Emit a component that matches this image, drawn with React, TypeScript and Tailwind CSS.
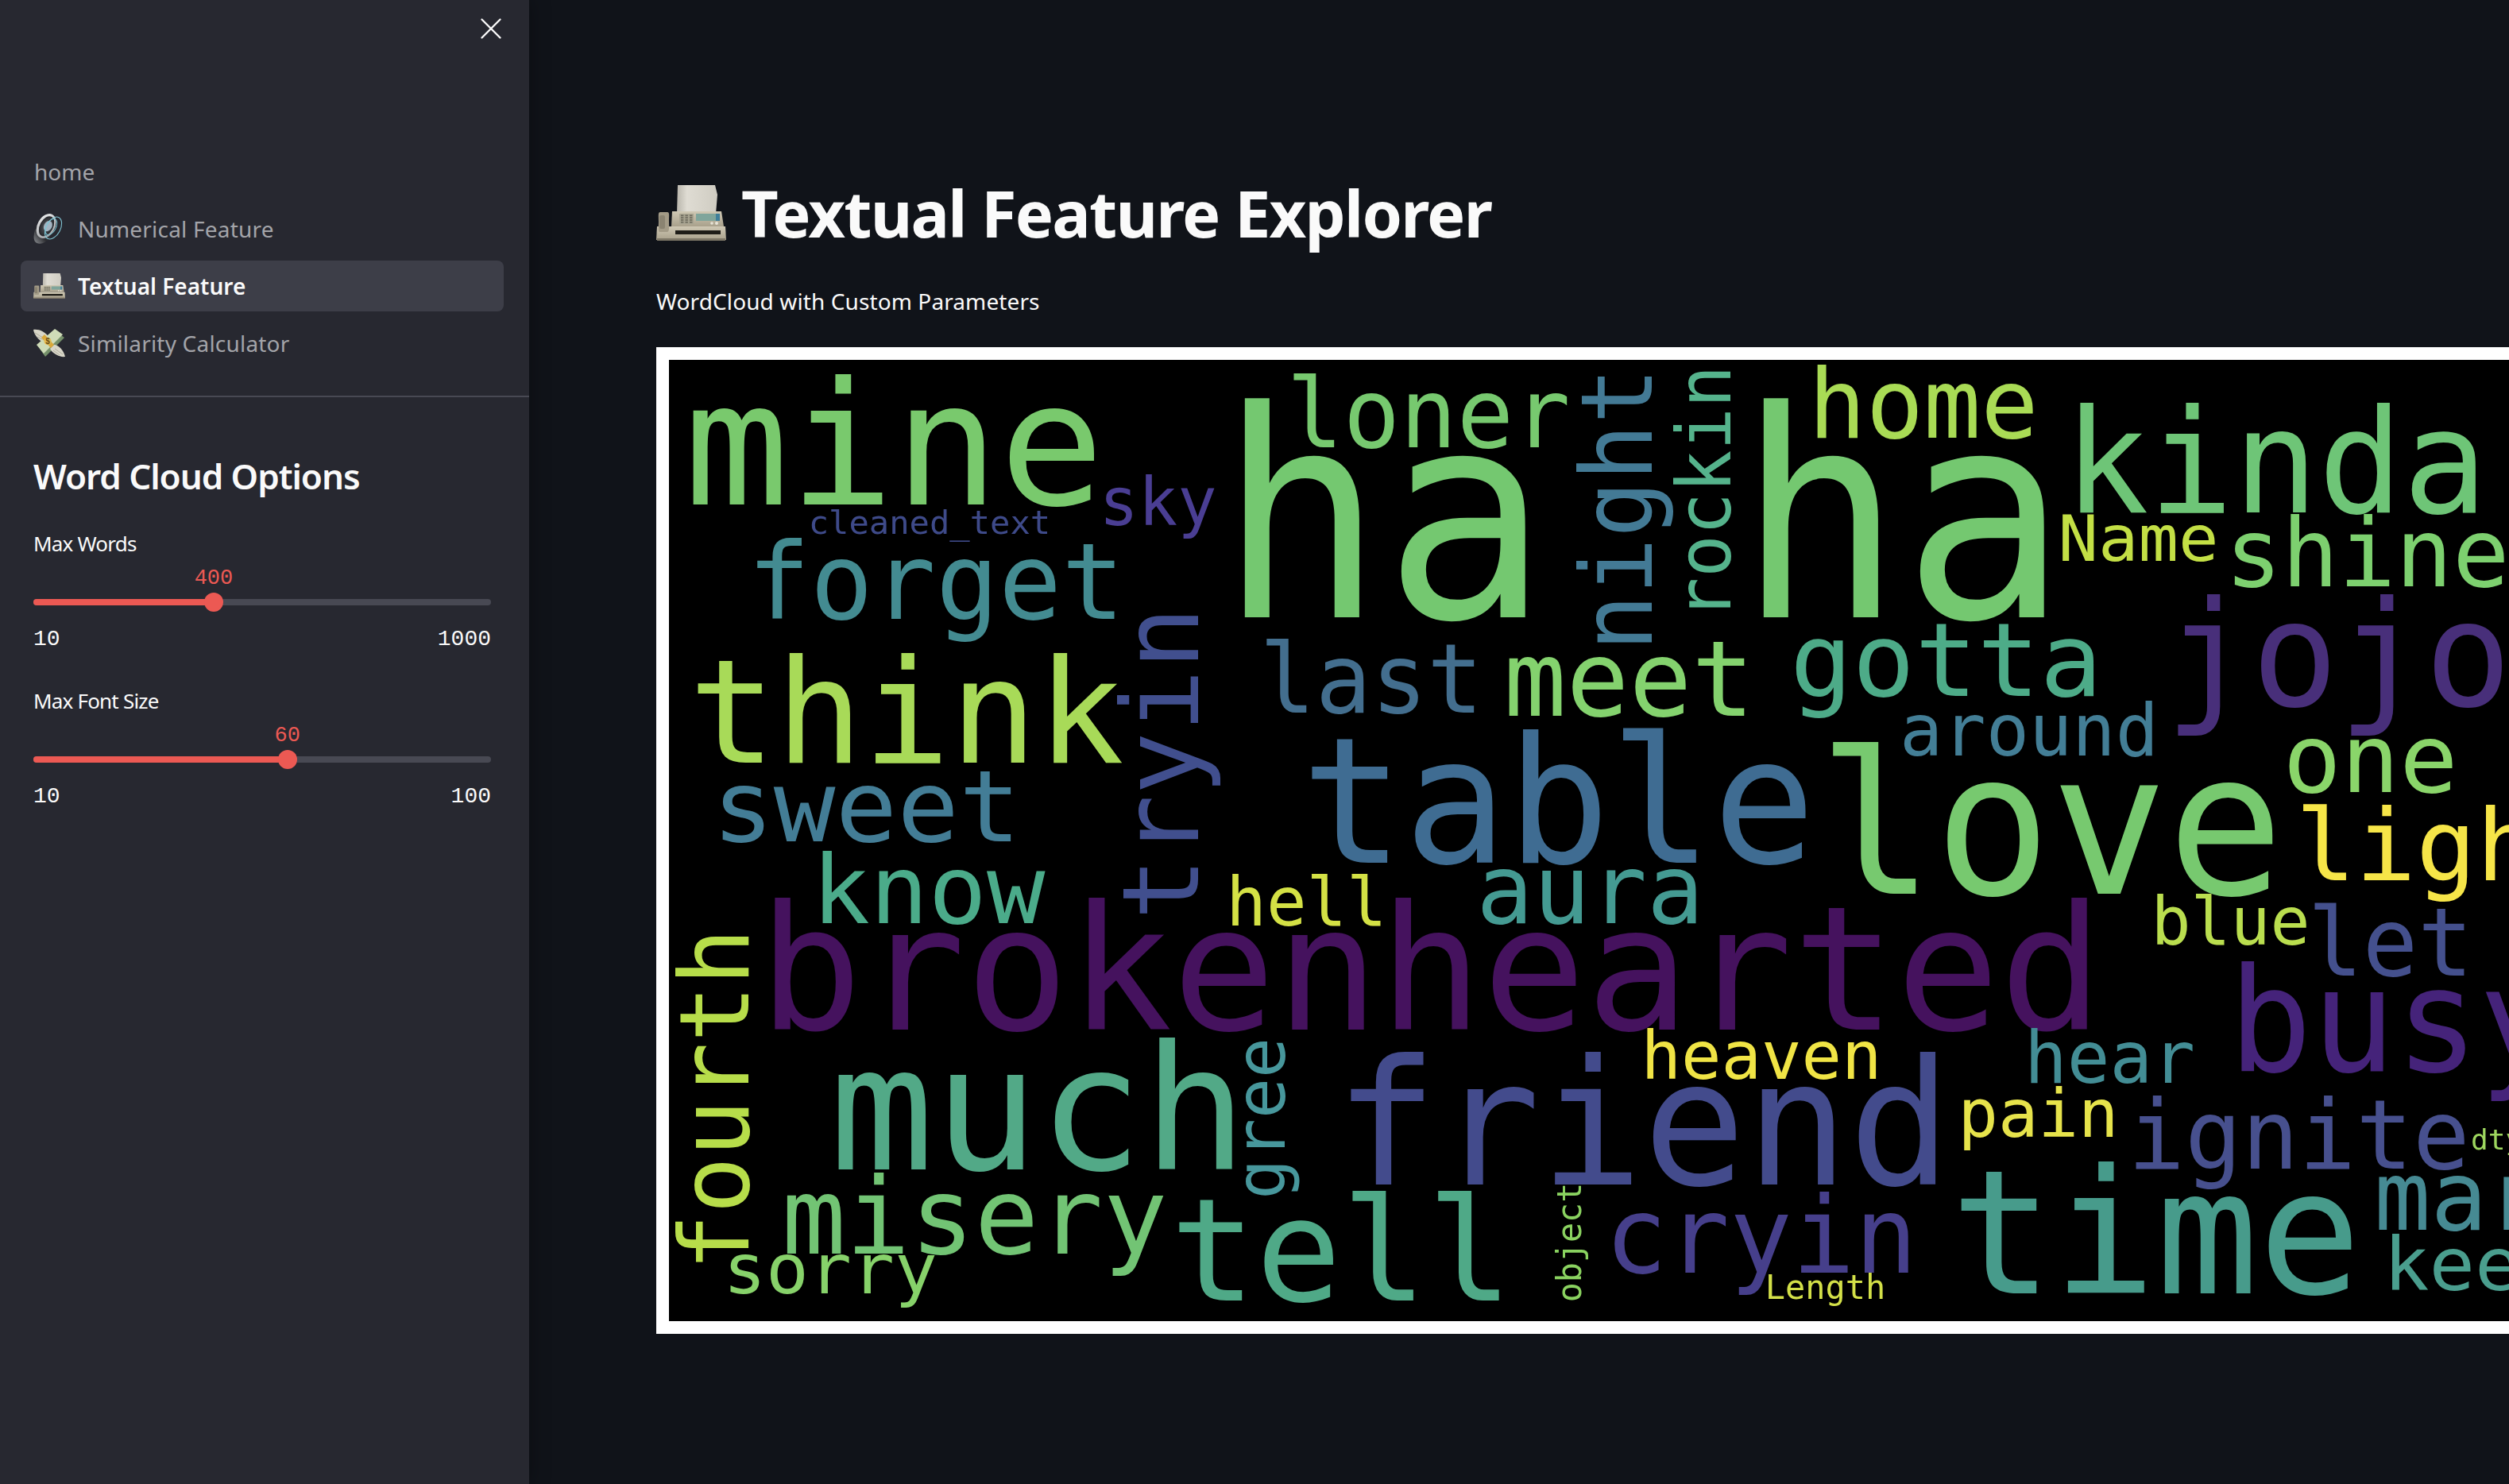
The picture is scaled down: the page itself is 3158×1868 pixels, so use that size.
import { X } from "lucide-react";

type W = { t: string; x: number; x2: number; y: number; s: number; c: string };
type R = { t: string; bx: number; y: number; y2: number; s: number; c: string };

const words: W[] = [
  { t: "mine", x: 873, x2: 1378, y: 634, s: 216, c: "#79c96d" },
  { t: "ha", x: 1554, x2: 1929, y: 776, s: 363, c: "#74c870" },
  { t: "ha", x: 2207, x2: 2582, y: 776, s: 363, c: "#74c870" },
  { t: "loner", x: 1626, x2: 1970, y: 562, s: 121, c: "#77c96f" },
  { t: "sky", x: 1388, x2: 1527, y: 660, s: 83, c: "#4a3e93" },
  { t: "cleaned_text", x: 1020, x2: 1320, y: 671, s: 41, c: "#3e4a89" },
  { t: "forget", x: 948, x2: 1408, y: 778, s: 134, c: "#438b91" },
  { t: "think", x: 877, x2: 1405, y: 959, s: 181, c: "#a8da58" },
  { t: "last", x: 1592, x2: 1860, y: 896, s: 122, c: "#436e8e" },
  { t: "meet", x: 1900, x2: 2201, y: 900, s: 132, c: "#84d26e" },
  { t: "table", x: 1650, x2: 2273, y: 1085, s: 221, c: "#3f6c92" },
  { t: "sweet", x: 903, x2: 1278, y: 1058, s: 125, c: "#437d96" },
  { t: "home", x: 2283, x2: 2559, y: 550, s: 122, c: "#a9db55" },
  { t: "kinda", x: 2608, x2: 3121, y: 644, s: 181, c: "#6ec577" },
  { t: "Name", x: 2595, x2: 2788, y: 705, s: 81, c: "#c3df45" },
  { t: "shine", x: 2807, x2: 3152, y: 737, s: 120, c: "#7dd06f" },
  { t: "gotta", x: 2260, x2: 2639, y: 875, s: 128, c: "#4dab88" },
  { t: "jojo", x: 2735, x2: 3151, y: 887, s: 183, c: "#482f7a" },
  { t: "around", x: 2396, x2: 2712, y: 950, s: 91, c: "#437e96" },
  { t: "one", x: 2880, x2: 3087, y: 996, s: 119, c: "#8ad56a" },
  { t: "love", x: 2302, x2: 2861, y: 1124, s: 249, c: "#77c96f" },
  { t: "light", x: 2896, x2: 3262, y: 1107, s: 124, c: "#f6e548" },
  { t: "know", x: 1028, x2: 1309, y: 1161, s: 120, c: "#4bab8a" },
  { t: "hell", x: 1548, x2: 1741, y: 1164, s: 85, c: "#d4e145" },
  { t: "aura", x: 1865, x2: 2138, y: 1161, s: 122, c: "#449a92" },
  { t: "brokenhearted", x: 967, x2: 2635, y: 1295, s: 218, c: "#45125e" },
  { t: "much", x: 1056, x2: 1558, y: 1471, s: 218, c: "#52a987" },
  { t: "misery", x: 991, x2: 1462, y: 1577, s: 134, c: "#72c474" },
  { t: "sorry", x: 915, x2: 1175, y: 1627, s: 88, c: "#87d26a" },
  { t: "tell", x: 1483, x2: 1894, y: 1636, s: 180, c: "#4fa987" },
  { t: "friend", x: 1692, x2: 2444, y: 1490, s: 220, c: "#434b8c" },
  { t: "blue", x: 2712, x2: 2903, y: 1188, s: 84, c: "#bade4f" },
  { t: "let", x: 2911, x2: 3106, y: 1227, s: 120, c: "#44508d" },
  { t: "busy", x: 2815, x2: 3215, y: 1347, s: 182, c: "#45237a" },
  { t: "heaven", x: 2070, x2: 2364, y: 1357, s: 84, c: "#f0e445" },
  { t: "hear", x: 2553, x2: 2758, y: 1362, s: 90, c: "#438d95" },
  { t: "pain", x: 2469, x2: 2662, y: 1430, s: 83, c: "#e6e34b" },
  { t: "ignite", x: 2685, x2: 3102, y: 1470, s: 121, c: "#47508e" },
  { t: "dtype", x: 3112, x2: 3217, y: 1446, s: 36, c: "#9ed75f" },
  { t: "mar", x: 2995, x2: 3195, y: 1547, s: 122, c: "#468a93" },
  { t: "keep", x: 3005, x2: 3225, y: 1623, s: 92, c: "#4a9e8e" },
  { t: "cryin", x: 2027, x2: 2406, y: 1601, s: 134, c: "#463f8b" },
  { t: "time", x: 2467, x2: 2960, y: 1627, s: 217, c: "#479b8b" },
  { t: "Length", x: 2224, x2: 2371, y: 1634, s: 42, c: "#d3e048" },
];

const rotated: R[] = [
  { t: "tryin", bx: 1508, y: 1150, y2: 770, s: 133, c: "#414f8e" },
  { t: "night", bx: 2079, y: 812, y2: 468, s: 124, c: "#437a95" },
  { t: "rockin", bx: 2178, y: 774, y2: 464, s: 94, c: "#55b38c" },
  { t: "fourth", bx: 942, y: 1592, y2: 1174, s: 121, c: "#b7dd4a" },
  { t: "gree", bx: 1617, y: 1504, y2: 1310, s: 88, c: "#47979c" },
  { t: "object", bx: 1990, y: 1636, y2: 1490, s: 42, c: "#8ad260" },
];

const B = 0.055;

function WordCloud() {
  return (
    <svg width={2420} height={1210} viewBox="842 452 2420 1210" className="block shrink-0 blur-[0.6px]" fontFamily="'DejaVu Sans Mono', monospace">
      <rect x={842} y={452} width={2420} height={1210} fill="#000" />
      {words.map((w, i) => (
        <text key={i} x={w.x - B * w.s} y={w.y} fontSize={w.s} fill={w.c} textLength={w.x2 - w.x + 2 * B * w.s} lengthAdjust="spacingAndGlyphs">
          {w.t}
        </text>
      ))}
      {rotated.map((w, i) => (
        <text key={i} transform={`translate(${w.bx} ${w.y + B * w.s}) rotate(-90)`} fontSize={w.s} fill={w.c} textLength={w.y - w.y2 + 2 * B * w.s} lengthAdjust="spacingAndGlyphs">
          {w.t}
        </text>
      ))}
    </svg>
  );
}

function Fax({ className }: { className: string }) {
  return (
    <svg viewBox="0 0 88 70" className={className}>
      <defs>
        <linearGradient id="faxPaper" x1="0" x2="1" y1="0" y2="0">
          <stop offset="0" stopColor="#b9b6ac" />
          <stop offset="0.25" stopColor="#dfdcd3" />
          <stop offset="1" stopColor="#cfccc2" />
        </linearGradient>
        <linearGradient id="faxBody" x1="0" x2="0" y1="0" y2="1">
          <stop offset="0" stopColor="#cfc8b4" />
          <stop offset="1" stopColor="#a9a18c" />
        </linearGradient>
      </defs>
      <path d="M27 0H74L77 12L75 36H26Z" fill="url(#faxPaper)" />
      <path d="M20 33H82L85 52H19Z" fill="url(#faxBody)" />
      <rect x="29" y="36" width="18" height="13" fill="#a8a491" />
      {[0, 1, 2, 3].map((r) =>
        [0, 1, 2].map((c) => <rect key={`${r}${c}`} x={31 + c * 5.5} y={37.5 + r * 2.8} width="3.4" height="1.7" fill="#6d6a5d" />),
      )}
      <rect x="50" y="36" width="25" height="9" fill="#7fa59b" />
      <rect x="75" y="36" width="5" height="9" fill="#3f7f9a" />
      <circle cx="70" cy="48" r="1.8" fill="#e8e4d8" />
      <circle cx="76" cy="48" r="2" fill="#e8e4d8" />
      <path d="M1 52H87L88 69H0Z" fill="url(#faxBody)" />
      <rect x="1" y="67" width="86" height="3" fill="#7d7666" />
      <rect x="24" y="57" width="57" height="5" fill="#1f1d18" />
      <path d="M5 34C2 34 3 38 3 46C3 52 2 58 4 59H14C17 58 16 52 16 46C16 38 17 34 14 34Z" fill="#a39b87" />
      <rect x="4" y="38" width="7" height="17" rx="2" fill="#8a8371" />
    </svg>
  );
}

function Speaker({ className }: { className: string }) {
  return (
    <svg viewBox="0 0 40 40" className={className}>
      <defs>
        <radialGradient id="spkCone" cx="0.5" cy="0.5" r="0.6">
          <stop offset="0" stopColor="#5c5f64" />
          <stop offset="1" stopColor="#1b1c20" />
        </radialGradient>
        <linearGradient id="spkRim" x1="0" x2="1" y1="0" y2="1">
          <stop offset="0" stopColor="#f0f1f2" />
          <stop offset="1" stopColor="#9a9da1" />
        </linearGradient>
        <linearGradient id="spkBack" x1="0" x2="1" y1="1" y2="0">
          <stop offset="0" stopColor="#8d9094" />
          <stop offset="0.45" stopColor="#2b2c30" />
          <stop offset="1" stopColor="#4c4e52" />
        </linearGradient>
      </defs>
      <path d="M6 13C1 21 -1 31 2 36C6 41 15 39 21 31Z" fill="url(#spkBack)" />
      <g transform="rotate(28 17 17)">
        <ellipse cx="16" cy="17" rx="11" ry="16.5" fill="url(#spkRim)" />
        <ellipse cx="16.5" cy="17" rx="8.3" ry="13.5" fill="url(#spkCone)" />
        <ellipse cx="18" cy="16" rx="5" ry="7" fill="#a3b4c2" />
        <ellipse cx="22" cy="15" rx="6" ry="11" fill="none" stroke="#74bccc" strokeWidth="1" />
        <ellipse cx="25" cy="15" rx="9" ry="15" fill="none" stroke="#82c6d5" strokeWidth="1.1" />
      </g>
    </svg>
  );
}

function Money({ className }: { className: string }) {
  return (
    <svg viewBox="0 0 40 36" className={className}>
      <path d="M0 1C6 0 15 3 20 11L12 17C7 14 1 8 0 1Z" fill="#d8d6c8" />
      <path d="M2 5L12 11M5 10L13 14" stroke="#a9a797" strokeWidth="0.9" />
      <path d="M8 25L30 4L39 11L15 35Z" fill="#75906a" />
      <path d="M4 20L27 0L37 7L13 31Z" fill="#cfdcb8" />
      <path d="M26 20C32 20 38 27 40 35C33 36 24 31 21 25Z" fill="#d8d6c8" />
      <path d="M27 25L37 32M25 27L33 33" stroke="#a9a797" strokeWidth="0.9" />
      <path d="M14 7L26 20L22 24L10 11Z" fill="#d9a83a" />
      <circle cx="18" cy="15.5" r="4.6" fill="#e4bd55" />
      <text x="18" y="19" textAnchor="middle" fontSize="10" fontWeight="700" fill="#6b4c12" fontFamily="'Liberation Sans', sans-serif">$</text>
    </svg>
  );
}

function NavRow({ icon, label, active }: { icon?: React.ReactNode; label: string; active?: boolean }) {
  return (
    <div
      className={
        active
          ? "flex h-[64px] items-center gap-[16px] rounded-[8px] bg-[#3d3e48] px-[16px] text-[28px] font-semibold text-[#fafafa]"
          : "flex h-[64px] items-center gap-[16px] rounded-[8px] px-[16px] text-[28px] text-[#a3a4a9]"
      }
    >
      {icon}
      <span className={active ? "tracking-[0px]" : "tracking-[0.2px]"}>{label}</span>
    </div>
  );
}

function Slider({ label, value, pct, min, max, mt }: { label: string; value: string; pct: number; min: string; max: string; mt: string }) {
  return (
    <div className={mt}>
      <div className="flex h-[40px] items-center text-[26px] tracking-[-0.8px] text-[#fafafa]">{label}</div>
      <div className="relative mt-[42px] h-[24px]">
        <div className="absolute inset-x-0 top-[8px] h-[8px] rounded-full bg-[#484953]" />
        <div className="absolute left-0 top-[8px] h-[8px] rounded-l-full bg-[#ec5953]" style={{ width: `${pct}%` }} />
        <div
          className="absolute top-0 h-[24px] w-[24px] -translate-x-1/2 rounded-full bg-[#ec5953]"
          style={{ left: `${pct}%` }}
        />
        <div
          className="absolute top-[-36px] -translate-x-1/2 font-['Liberation_Mono',monospace] text-[27px] leading-[36px] text-[#ec5953]"
          style={{ left: `${pct}%` }}
        >
          {value}
        </div>
      </div>
      <div className="mt-[17px] flex h-[36px] items-center justify-between font-['Liberation_Mono',monospace] text-[28px] text-[#fafafa]">
        <span>{min}</span>
        <span>{max}</span>
      </div>
    </div>
  );
}

export default function App() {
  return (
    <div className="flex h-screen w-screen overflow-hidden bg-[#101319] font-['Noto_Sans',sans-serif]">
      <aside className="relative z-10 flex w-[666px] shrink-0 flex-col bg-[#272830] shadow-[0_0_24px_rgba(0,0,0,0.35)]">
        <div className="flex justify-end pr-[25px] pt-[13px] text-[#fafafa]">
          <X size={46} strokeWidth={1.25} />
        </div>
        <nav className="ml-[26px] mr-[32px] mt-[125px] flex flex-col gap-[8px]">
          <div className="flex h-[64px] items-center px-[17px] text-[28px] text-[#a3a4a9]">home</div>
          <NavRow icon={<Speaker className="h-[40px] w-[40px]" />} label="Numerical Feature" />
          <NavRow icon={<Fax className="h-[32px] w-[40px]" />} label="Textual Feature" active />
          <NavRow icon={<Money className="h-[36px] w-[40px]" />} label="Similarity Calculator" />
        </nav>
        <div className="mt-[34px] h-[2px] bg-[#484953]" />
        <div className="pl-[42px] pr-[48px]">
          <h2 className="mt-[67px] text-[44px] font-semibold leading-[64px] tracking-[-1.05px] text-[#fafafa]">Word Cloud Options</h2>
          <Slider label="Max Words" value="400" pct={39.4} min="10" max="1000" mt="mt-[33px]" />
          <Slider label="Max Font Size" value="60" pct={55.5} min="10" max="100" mt="mt-[39px]" />
        </div>
      </aside>
      <main className="flex min-w-0 flex-1 flex-col pl-[160px] pt-[224px]">
        <div className="flex h-[88px] items-center gap-[19px]">
          <Fax className="h-[70px] w-[88px] shrink-0" />
          <h1 className="text-[81px] font-bold leading-[88px] tracking-[-1.77px] text-[#fafafa]">Textual Feature Explorer</h1>
        </div>
        <p className="mt-[47px] h-[40px] text-[28px] leading-[40px] tracking-[0.1px] text-[#fafafa]">WordCloud with Custom Parameters</p>
        <div className="mt-[38px] w-[2450px] shrink-0 bg-white p-[16px]">
          <WordCloud />
        </div>
      </main>
    </div>
  );
}
